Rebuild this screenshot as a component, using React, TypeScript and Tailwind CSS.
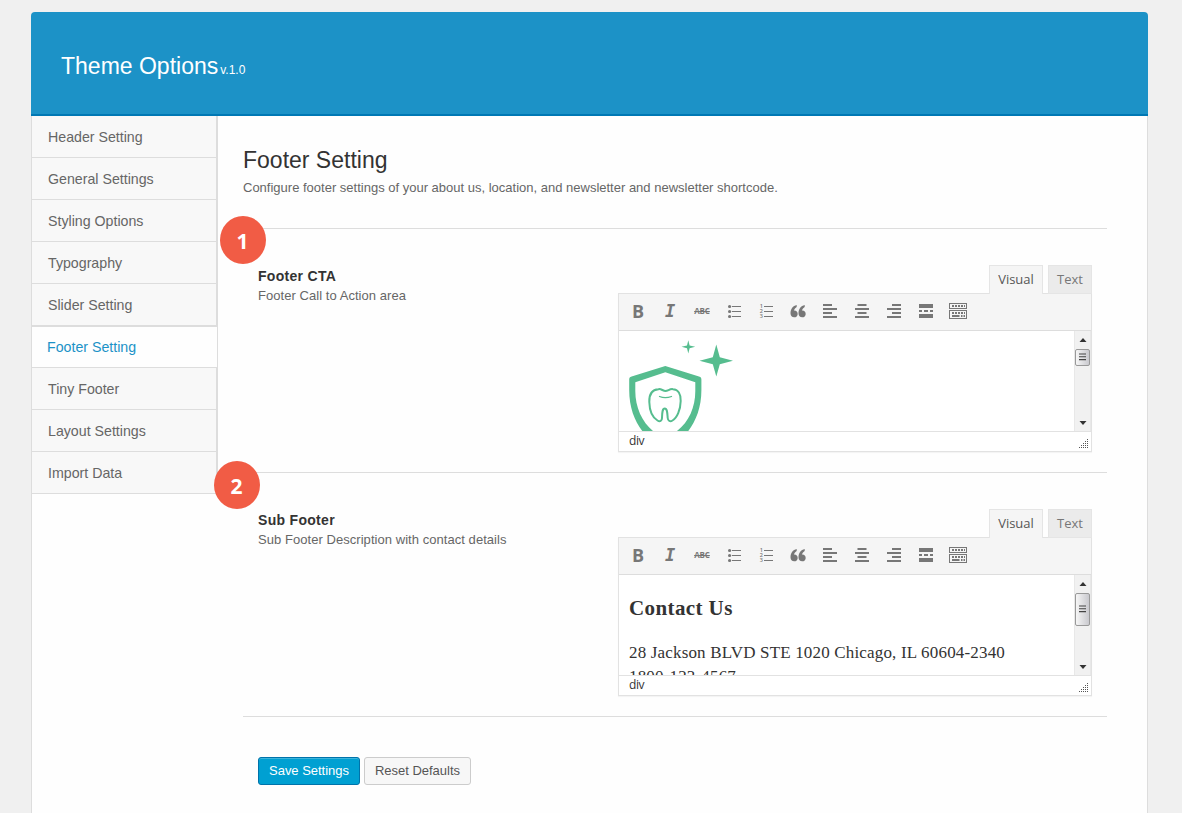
import React from "react";

const navItems = [
  "Header Setting",
  "General Settings",
  "Styling Options",
  "Typography",
  "Slider Setting",
  "Footer Setting",
  "Tiny Footer",
  "Layout Settings",
  "Import Data",
];

function Sidebar() {
  return (
    <nav className="flex h-[378px] w-[186px] shrink-0 flex-col border-r border-[#dddddd] text-[14.2px] text-[#666666]">
      {navItems.map((item) =>
        item === "Footer Setting" ? (
          <a
            key={item}
            className="flex h-[42px] items-center border-t border-b border-[#dddddd] bg-[#fefefe] pt-px pl-[15px] text-[#1c92c7]"
          >
            {item}
          </a>
        ) : (
          <a
            key={item}
            className="flex h-[42px] items-center border-r border-b border-[#dddddd] bg-[#f8f8f8] pt-[2px] pl-4"
          >
            {item}
          </a>
        )
      )}
    </nav>
  );
}

function Icon({ children }: { children: React.ReactNode }) {
  return (
    <svg
      viewBox="0 0 20 20"
      className="h-5 w-5 shrink-0 text-[#777777]"
      fill="currentColor"
      stroke="none"
    >
      {children}
    </svg>
  );
}

function Bars({ short }: { short: number }) {
  return (
    <Icon>
      <rect x={short} y="3" width="9" height="2" />
      <rect x="3" y="7" width="14" height="2" />
      <rect x={short} y="11" width="9" height="2" />
      <rect x="3" y="15" width="14" height="2" />
    </Icon>
  );
}

function Toolbar() {
  return (
    <div className="flex h-[37px] items-center gap-3 border-b border-[#dddddd] bg-[#f5f5f5] pb-[2px] pl-[9px]">
      <span className="flex h-5 w-5 items-center justify-center font-['Open_Sans'] text-[18px] leading-5 font-bold text-[#777777]">
        B
      </span>
      <span className="flex h-5 w-5 items-center justify-center font-['DejaVu_Sans_Mono'] text-[17px] leading-5 font-bold text-[#777777] italic">
        I
      </span>
      <span className="flex h-5 w-5 items-center justify-center font-['Open_Sans'] text-[8px] leading-5 font-bold tracking-[-0.1px] text-[#777777] line-through">
        ABC
      </span>
      <Icon>
        {[5, 10, 15].map((y) => (
          <g key={y}>
            <circle cx="5.6" cy={y + 0.5} r="1.6" />
            <rect x="8" y={y} width="9" height="1" />
          </g>
        ))}
      </Icon>
      <Icon>
        {[5, 10, 15].map((y, i) => (
          <g key={y}>
            <text x="3.7" y={y + 2.4} className="font-['Open_Sans'] text-[5.5px] font-semibold">
              {i + 1}
            </text>
            <rect x="8" y={y} width="9" height="1" />
          </g>
        ))}
      </Icon>
      <Icon>
        {[0, 8].map((x) => (
          <path
            key={x}
            transform={`translate(${x} 0)`}
            d="M8.700 4C5 4.800 2.500 8 2.500 12.200c0 2.500 1.500 4.100 3.700 4.100 2 0 3.500-1.500 3.500-3.400s-1.400-3.300-3.200-3.300c-.2 0-.4 0-.6.1.5-1.700 1.500-3 2.800-3.800z"
          />
        ))}
      </Icon>
      <Bars short={3} />
      <Bars short={5.5} />
      <Bars short={8} />
      <Icon>
        <rect x="3" y="3" width="14" height="4" />
        <rect x="3" y="9" width="3" height="2" />
        <rect x="8" y="9" width="4" height="2" />
        <rect x="14" y="9" width="3" height="2" />
        <rect x="3" y="13" width="14" height="4" />
      </Icon>
      <Icon>
        <g fill="none" stroke="currentColor">
          <rect x="1.500" y="2.500" width="17" height="5" />
          <rect x="1.500" y="9.500" width="17" height="8" />
          <path d="M4 5h13" strokeWidth="2" strokeDasharray="2 1" />
          <path d="M4 12h13" strokeWidth="2" strokeDasharray="2 1" />
          <path d="M4 15h7.500M13 15h1.500M15.500 15h1.500" strokeWidth="2" />
        </g>
      </Icon>
    </div>
  );
}

function Scrollbar({ large }: { large?: boolean }) {
  return (
    <div className="flex w-[17px] shrink-0 flex-col items-center border-x border-[#e8e8e8] bg-[#f1f1f1]">
      <svg viewBox="0 0 8 18" className="h-[18px] w-2 shrink-0">
        <path d="M4 7l3.500 4h-7z" fill="#333333" />
      </svg>
      <div
        className={
          "-ml-px flex w-[15px] shrink-0 items-center justify-center rounded-[2px] border border-[#999999] bg-linear-to-r from-[#f6f6f6] to-[#c9c9ce] " +
          (large ? "h-[33px]" : "h-[17px]")
        }
      >
        <svg viewBox="0 0 7 9" className="h-[9px] w-[7px]">
          <path d="M0 1h7M0 3.800h7M0 6.600h7" stroke="#444444" strokeWidth="1.100" />
        </svg>
      </div>
      <svg viewBox="0 0 8 18" className="mt-auto h-[18px] w-2 shrink-0">
        <path d="M.5 8h7L4 12z" fill="#333333" />
      </svg>
    </div>
  );
}

function Grip() {
  const dots: [number, number][] = [];
  for (let r = 0; r < 5; r++) {
    for (let c = 4 - r; c < 5; c++) dots.push([c * 2, r * 2]);
  }
  return (
    <svg viewBox="0 0 10 10" className="h-[10px] w-[10px]">
      {dots.map(([x, y]) => (
        <rect key={x + "-" + y} x={x} y={y} width="1" height="1" fill="#555555" />
      ))}
    </svg>
  );
}

function Editor({ large, children }: { large?: boolean; children: React.ReactNode }) {
  return (
    <div className="w-[474px]">
      <div className="relative z-10 -mb-px flex justify-end gap-[5px] font-['Open_Sans'] text-[13px] leading-[27px]">
        <span className="h-[29px] w-[54px] border border-b-0 border-[#e5e5e5] bg-[#f5f5f5] text-center text-[#555555]">
          Visual
        </span>
        <span className="h-[29px] w-11 border border-[#e5e5e5] bg-[#ebebeb] text-center text-[#777777]">
          Text
        </span>
      </div>
      <div className="h-[159px] border border-[#e2e2e2] bg-white shadow-[0_1px_1px_rgba(0,0,0,0.04)]">
        <Toolbar />
        <div className="flex h-[100px] overflow-hidden">
          <div className="h-full flex-1 overflow-hidden">{children}</div>
          <Scrollbar large={large} />
        </div>
        <div className="flex h-5 items-center justify-between border-t border-[#e2e2e2] pr-[2px] pl-[10px] font-['Open_Sans'] text-[12px] leading-4 tracking-[-0.4px] text-[#333333]">
          <span className="-mt-px">div</span>
          <span className="mt-1">
            <Grip />
          </span>
        </div>
      </div>
    </div>
  );
}

function ShieldLogo() {
  return (
    <svg viewBox="0 0 130 120" className="h-[120px] w-[130px]" fill="#56bd8f">
      <path
        fillRule="evenodd"
        d="M46.300 35L80 45.500C81.800 46 82.400 46.800 82.400 48.500V59C82.400 76 77 90 69.300 100C62 109 54 114 46.300 117C39 114 31 109 23.300 100C15.500 90 10.200 76 10.200 59V48.500C10.200 46.800 10.800 46 12.600 45.500ZM46.300 41.300L16.300 51.300V60C16.300 76 23 91 34 100C38 104 42.500 107.500 46.300 109.500C50.500 107.500 54.500 104 58 100C70 91 76.300 76 76.300 60V51.300Z"
      />
      <g fill="none" stroke="#56bd8f" strokeLinecap="round">
        <path
          d="M39.500 58.200C42 57.500 44 60 46.500 60C49 60 51 57.500 54 58.200C59 58.500 62 63 61.700 70C61.500 79 58 87 53.500 89.500C51 91 49 90 48.700 87C48.300 82 48.300 77.500 45.800 77.500C43.200 77.500 43.200 82 43 87C43 90 41 91 38.500 89.500C33.500 86.500 30.500 79 30.300 71C30 63 33.500 58.500 39.500 58.200Z"
          strokeWidth="2"
        />
        <path d="M40.500 65.500C44 67 48.500 67 52.500 65.500" strokeWidth="1.300" />
      </g>
      <path d="M97.300 13.500L100.800 26.200L114 29.700L100.800 33.200L97.300 45.500L93.800 33.200L80.500 29.700L93.800 26.200Z" />
      <path d="M69.300 9.200L70.600 14.400L76.200 15.800L70.600 17.200L69.300 22.600L68 17.200L62.500 15.800L68 14.400Z" />
    </svg>
  );
}

function Badge({ n, className }: { n: number; className: string }) {
  return (
    <span
      className={
        "absolute z-20 flex h-12 w-[46px] items-center justify-center rounded-[50%] bg-[#f15c45] pt-[2px] pr-px font-['Open_Sans'] text-[21px] leading-none font-bold text-white " +
        className
      }
    >
      {n}
    </span>
  );
}

function SettingRow({
  title,
  note,
  children,
}: {
  title: string;
  note: string;
  children: React.ReactNode;
}) {
  return (
    <section className="flex h-[244px] justify-between border-t border-[#dddddd] pt-9 pr-[15px] pl-[15px]">
      <div>
        <h3 className="mt-[3px] text-[14px] leading-4 font-bold tracking-[0.3px] text-[#333333]">
          {title}
        </h3>
        <p className="mt-1 text-[13px] leading-4 tracking-[0.05px] text-[#666666]">{note}</p>
      </div>
      {children}
    </section>
  );
}

export default function App() {
  return (
    <div className="flex h-[813px] w-[1182px] overflow-hidden bg-[#f0f0f0] pt-3 pl-[31px] font-['Liberation_Sans',Arial,sans-serif]">
      <div className="relative flex w-[1117px] flex-col">
        <header className="flex h-[104px] shrink-0 items-baseline rounded-t-[4px] border-b-2 border-[#0078b4] bg-[#1c92c7] pt-10 pl-[30px] text-white">
          <h1 className="text-[23px] leading-7">Theme Options</h1>
          <span className="ml-[2px] text-[12px]">v.1.0</span>
        </header>
        <div className="flex flex-1 border-x border-[#dddddd] bg-[#fefefe]">
          <Sidebar />
          <main className="flex-1 pr-10 pl-[25px]">
            <div className="h-28 pt-[30px]">
              <h2 className="text-[23px] leading-7 text-[#333333]">Footer Setting</h2>
              <p className="mt-[6px] text-[13px] leading-4 text-[#666666]">
                Configure footer settings of your about us, location, and newsletter and newsletter
                shortcode.
              </p>
            </div>
            <SettingRow title="Footer CTA" note="Footer Call to Action area">
              <Editor>
                <ShieldLogo />
              </Editor>
            </SettingRow>
            <SettingRow title="Sub Footer" note="Sub Footer Description with contact details">
              <Editor large>
                <div className="pl-[10px] font-['Liberation_Serif',Georgia,serif] whitespace-nowrap text-[#333333]">
                  <h2 className="pt-[21px] text-[21px] leading-6 font-bold tracking-[0.4px]">
                    Contact Us
                  </h2>
                  <p className="mt-[21px] text-[17px] leading-6 tracking-[0.17px]">
                    28 Jackson BLVD STE 1020 Chicago, IL 60604-2340
                    <br />
                    1800-123-4567
                  </p>
                </div>
              </Editor>
            </SettingRow>
            <div className="flex gap-1 border-t border-[#dddddd] pt-10 pl-[15px] text-[13px] tracking-[-0.02px]">
              <button className="h-7 w-[102px] rounded-[3px] border border-[#0073aa] bg-[#00a0d2] pb-px text-white shadow-[inset_0_1px_0_rgba(120,200,230,0.5)]">
                Save Settings
              </button>
              <button className="h-7 w-[107px] rounded-[3px] border border-[#cccccc] bg-[#f7f7f7] pb-px text-[#555555]">
                Reset Defaults
              </button>
            </div>
          </main>
        </div>
        <Badge n={1} className="top-[204px] left-[189px]" />
        <Badge n={2} className="top-[449px] left-[183px]" />
      </div>
    </div>
  );
}
